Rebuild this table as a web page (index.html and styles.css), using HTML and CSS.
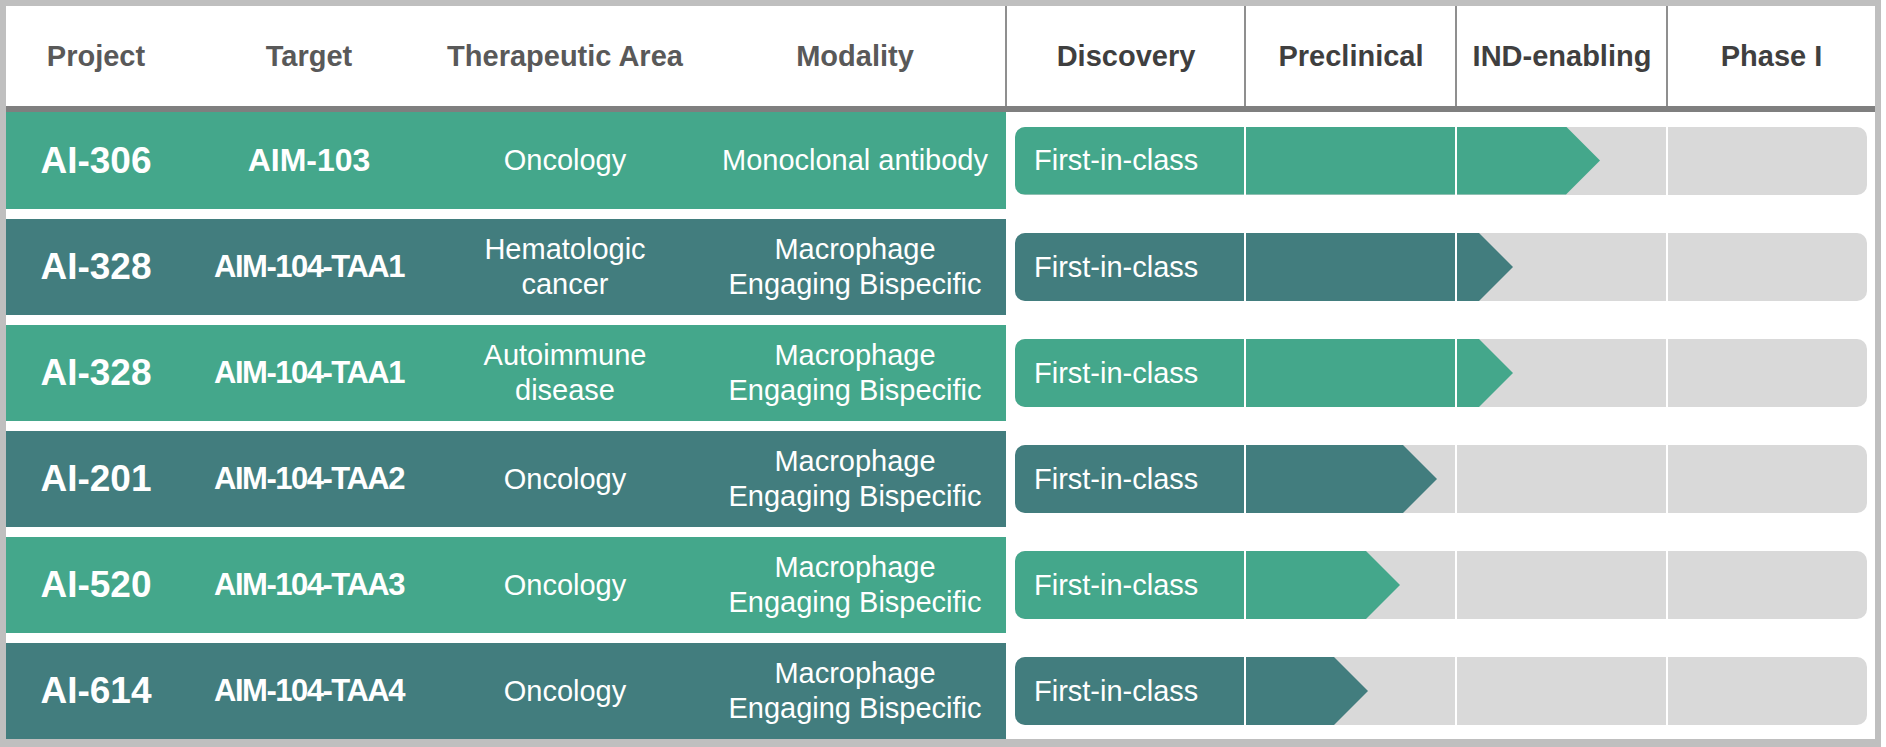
FILE: index.html
```html
<!DOCTYPE html>
<html lang="en">
<head>
<meta charset="utf-8">
<title>Pipeline</title>
<link rel="stylesheet" href="styles.css">
</head>
<body>
<div class="frame">
  <div class="header">
    <div class="lhead">
      <div class="hcell">Project</div>
      <div class="hcell">Target</div>
      <div class="hcell">Therapeutic Area</div>
      <div class="hcell mod">Modality</div>
    </div>
    <div class="rhead">
      <div class="phase">Discovery</div>
      <div class="phase">Preclinical</div>
      <div class="phase">IND-enabling</div>
      <div class="phase">Phase I</div>
    </div>
  </div>
  <div class="rows">
    <div class="row first">
      <div class="info green">
        <div class="proj">AI-306</div>
        <div class="target">AIM-103</div>
        <div class="txt">Oncology</div>
        <div class="txt mod">Monoclonal antibody</div>
      </div>
      <div class="track"><div class="bar"><div class="fill green" style="width:585px">First-in-class</div></div></div>
    </div>
    <div class="row">
      <div class="info teal">
        <div class="proj">AI-328</div>
        <div class="target long">AIM-104-TAA1</div>
        <div class="txt">Hematologic<br>cancer</div>
        <div class="txt mod">Macrophage<br>Engaging Bispecific</div>
      </div>
      <div class="track"><div class="bar"><div class="fill teal" style="width:498px">First-in-class</div></div></div>
    </div>
    <div class="row">
      <div class="info green">
        <div class="proj">AI-328</div>
        <div class="target long">AIM-104-TAA1</div>
        <div class="txt">Autoimmune<br>disease</div>
        <div class="txt mod">Macrophage<br>Engaging Bispecific</div>
      </div>
      <div class="track"><div class="bar"><div class="fill green" style="width:498px">First-in-class</div></div></div>
    </div>
    <div class="row">
      <div class="info teal">
        <div class="proj">AI-201</div>
        <div class="target long">AIM-104-TAA2</div>
        <div class="txt">Oncology</div>
        <div class="txt mod">Macrophage<br>Engaging Bispecific</div>
      </div>
      <div class="track"><div class="bar"><div class="fill teal" style="width:422px">First-in-class</div></div></div>
    </div>
    <div class="row">
      <div class="info green">
        <div class="proj">AI-520</div>
        <div class="target long">AIM-104-TAA3</div>
        <div class="txt">Oncology</div>
        <div class="txt mod">Macrophage<br>Engaging Bispecific</div>
      </div>
      <div class="track"><div class="bar"><div class="fill green" style="width:385px">First-in-class</div></div></div>
    </div>
    <div class="row">
      <div class="info teal">
        <div class="proj">AI-614</div>
        <div class="target long">AIM-104-TAA4</div>
        <div class="txt">Oncology</div>
        <div class="txt mod">Macrophage<br>Engaging Bispecific</div>
      </div>
      <div class="track"><div class="bar"><div class="fill teal" style="width:353px">First-in-class</div></div></div>
    </div>
  </div>
</div>
</body>
</html>
```

FILE: styles.css
```css
html, body {
  margin: 0;
  padding: 0;
  background: #ffffff;
}

body {
  font-family: "Liberation Sans", Arial, sans-serif;
  width: 1886px;
  height: 747px;
  overflow: hidden;
}

.frame {
  box-sizing: border-box;
  width: 1881px;
  height: 747px;
  border: 6px solid #bfbfbf;
  border-bottom-width: 8px;
  background: #ffffff;
  display: flex;
  flex-direction: column;
}

.header {
  height: 100px;
  border-bottom: 6px solid #7f7f7f;
  display: grid;
  grid-template-columns: 1000px 1fr;
}

.lhead,
.info {
  display: grid;
  grid-template-columns: 180px 246px 266px 308px;
  align-items: center;
  text-align: center;
}

.hcell {
  font-size: 29px;
  font-weight: bold;
  color: #595959;
}

.mod {
  padding-left: 6px;
}

.rhead {
  display: grid;
  grid-template-columns: 239px 211px 211px 1fr;
}

.phase {
  display: flex;
  align-items: center;
  justify-content: center;
  font-size: 29px;
  font-weight: bold;
  color: #3f3f3f;
  border-left: 2px solid #8f8f8f;
  margin-left: -1px;
}

.rows {
  display: flex;
  flex-direction: column;
  gap: 10px;
}

.row {
  height: 96px;
  display: grid;
  grid-template-columns: 1000px 1fr;
}

.row.first {
  height: 97px;
}

.green {
  background: #44a78b;
}

.teal {
  background: #427d7e;
}

.info {
  color: #ffffff;
  height: 100%;
}

.proj {
  font-size: 37px;
  font-weight: bold;
}

.target {
  font-size: 32px;
  font-weight: bold;
}

.target.long {
  font-size: 31px;
  letter-spacing: -1.5px;
}

.txt {
  font-size: 29px;
  line-height: 35px;
}

.track {
  display: flex;
  align-items: center;
  padding: 0 8px 0 9px;
}

.bar {
  position: relative;
  flex: 1;
  height: 68px;
  border-radius: 10px;
  background: #d9d9d9;
  overflow: hidden;
  display: flex;
}

.bar::after {
  content: "";
  position: absolute;
  inset: 0;
  pointer-events: none;
  background:
    linear-gradient(to right, transparent 229px, #ffffff 229px, #ffffff 231px, transparent 231px),
    linear-gradient(to right, transparent 440px, #ffffff 440px, #ffffff 442px, transparent 442px),
    linear-gradient(to right, transparent 651px, #ffffff 651px, #ffffff 653px, transparent 653px);
}

.fill {
  height: 100%;
  box-sizing: border-box;
  padding-left: 19px;
  display: flex;
  align-items: center;
  font-size: 29px;
  color: #ffffff;
  white-space: nowrap;
  clip-path: polygon(0 0, calc(100% - 34px) 0, 100% 50%, calc(100% - 34px) 100%, 0 100%);
}
```
